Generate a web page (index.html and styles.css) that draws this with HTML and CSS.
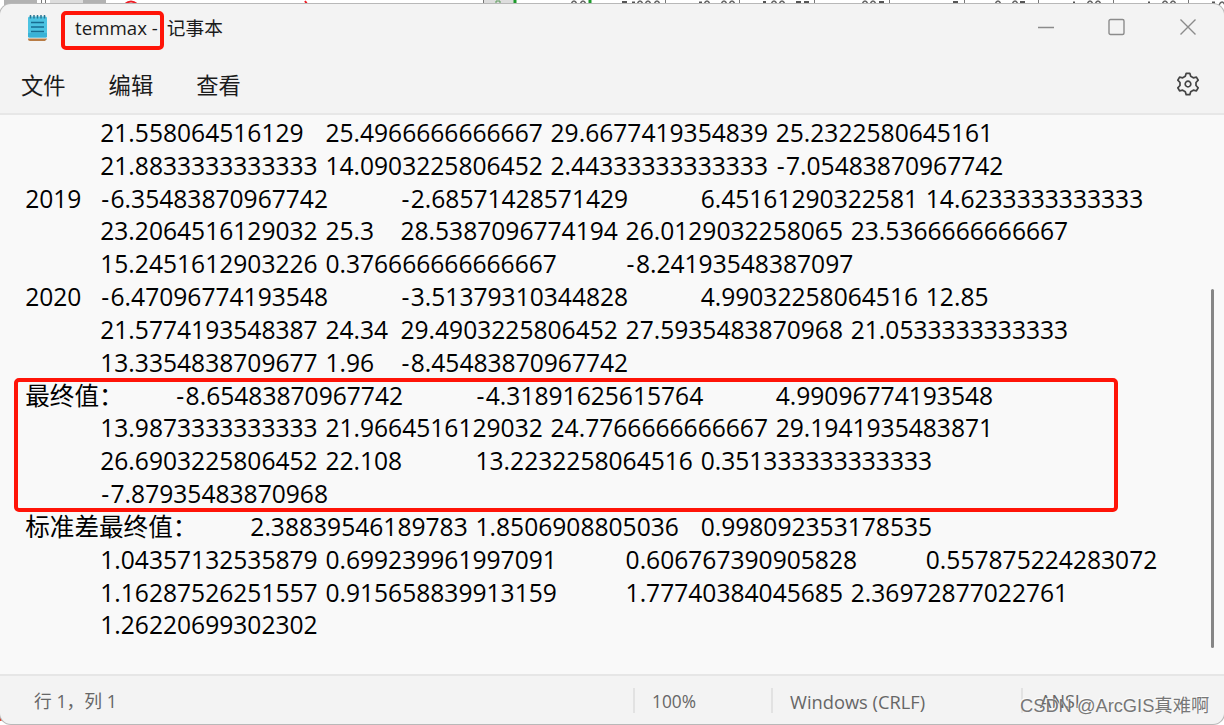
FILE: index.html
```html
<!DOCTYPE html>
<html lang="zh-CN">
<head>
    <meta charset="UTF-8">
    <title>temmax - 记事本</title>
    <link rel="stylesheet" href="styles.css">
</head>
<body>
    <!-- 后面窗口露出的边缘 -->
    <svg class="backdrop" width="1224" height="725" viewBox="0 0 1224 725">
        <rect width="1224" height="725" fill="#fff"/>
        <path fill="#b2b2b2" d="M4 0h33v5H4zM83 0h23v5H83z"/>
        <path fill="#ddd" d="M50 0h33v5H50zM484 0h31v5h-31z"/>
        <path stroke="#777" d="M41.5 0v4M45.5 0v4M483.500 0v4M665.500 0v4M739.500 0v4M814.500 0v4M889.500 0v4M964.500 0v4M1038.500 0v4M1113.500 0v4M1188.500 0v4"/>
        <path stroke="#1c9a2a" stroke-width="3" d="M515 0v4M590 0v4"/>
        <path stroke="#5b9a5b" fill="none" d="M496 4V1h4v3"/>
        <path stroke="#ed1c24" stroke-width="2" fill="none" d="M125 4q6-5 12 0M274 4h2M279 4h10M305 1l2 3"/>
        <path stroke="#666" stroke-width="1.500" fill="none" d="M571 4q3-6 6 0M580 4q3-6 6 0M637 4q3-6 6 0M645 4q3-6 6 0M654 4q3-6 6 0M704 4q3-6 6 0M721 4q3-6 6 0M729 4q3-6 6 0M771 4q3-6 6 0M779 4q3-6 6 0M862 4q3-6 6 0M870 4q3-6 6 0M995 4q3-6 6 0M1012 4q3-6 6 0M1087 4q3-6 6 0M1095 4q3-6 6 0M1162 4q3-6 6 0M1170 4q3-6 6 0M1219 5q3-6 6 0"/>
        <path stroke="#555" stroke-width="3" d="M622 2.500h5M632 3h3M699 3h3M763 2.500h3M796 2.500h5M804 2.500h5M879 2.500h5M953 2.500h5M1020 2.500h5M1073 3h2M1148 3h2M1212 3h3"/>
        <path fill="#e3301b" d="M0 717l4 3-4 1zM44 724h5v1h-5z"/>
        <path fill="#888" d="M63 724h13v1H63z"/>
    </svg>

    <div class="window">
        <div class="titlebar">
            <svg class="app-icon" width="22" height="28" viewBox="0 0 22 28">
                <path d="M1 22h19v3l-2 2H3q-2 0-2-2z" fill="#b87c45"/>
                <path d="M1 23h19v1.500H1z" fill="#fff"/>
                <rect x="1" y="2.500" width="19" height="21" rx="1.500" fill="#4cc3e2"/>
                <path d="M1 19h19v3.500q0 1-1 1H2q-1 0-1-1z" fill="#3ab2d6"/>
                <path d="M3.500 1v3.500M7 1v3.500M10.500 1v3.500M14 1v3.500M17.500 1v3.500" stroke="#2a7591" stroke-width="1.500"/>
                <path d="M4 8.500h13M4 13h13M4 17.500h13" stroke="#176c91" stroke-width="1.500"/>
            </svg>
            <span class="title">temmax -</span>
            <span class="app-name">记事本</span>
            <div class="window-buttons">
                <svg width="18" height="18" viewBox="0 0 18 18"><path d="M1 9.500h16"/></svg>
                <svg width="18" height="18" viewBox="0 0 18 18"><rect x="1" y="1.500" width="15" height="15" rx="1.500"/></svg>
                <svg width="18" height="18" viewBox="0 0 18 18"><path d="M1.500 1.500l15 15M16.500 1.500l-15 15"/></svg>
            </div>
        </div>

        <div class="menubar">
            <span class="menu">文件</span>
            <span class="menu">编辑</span>
            <span class="menu">查看</span>
            <svg class="settings" width="24" height="24" viewBox="-12 -12 24 24">
                <path d="M-2.700-7.700L-1.800-10.700H1.800L2.700-7.700 5.300-6.200 8.400-6.900 10.200-3.800 8-1.500V1.500L10.200 3.800 8.400 6.900 5.300 6.200 2.700 7.700 1.800 10.700H-1.800L-2.700 7.700-5.300 6.200-8.400 6.900-10.200 3.800-8 1.500V-1.500L-10.200-3.800-8.400-6.900-5.300-6.200z"/>
                <circle r="2.800"/>
            </svg>
        </div>

        <div class="editor">
<pre class="text">	21.558064516129	25.4966666666667	29.6677419354839	25.2322580645161
	21.8833333333333	14.0903225806452	2.44333333333333	<span class="neg">-</span>7.05483870967742
2019	<span class="neg">-</span>6.35483870967742	<span class="neg">-</span>2.68571428571429	6.45161290322581	14.6233333333333
	23.2064516129032	25.3	28.5387096774194	26.0129032258065	23.5366666666667
	15.2451612903226	0.376666666666667	<span class="neg">-</span>8.24193548387097
2020	<span class="neg">-</span>6.47096774193548	<span class="neg">-</span>3.51379310344828	4.99032258064516	12.85
	21.5774193548387	24.34	29.4903225806452	27.5935483870968	21.0533333333333
	13.3354838709677	1.96	<span class="neg">-</span>8.45483870967742
最终值：	<span class="neg">-</span>8.65483870967742	<span class="neg">-</span>4.31891625615764	4.99096774193548
	13.9873333333333	21.9664516129032	24.7766666666667	29.1941935483871
	26.6903225806452	22.108	13.2232258064516	0.351333333333333
	<span class="neg">-</span>7.87935483870968
标准差最终值：	2.38839546189783	1.8506908805036	0.998092353178535
	1.04357132535879	0.699239961997091	0.606767390905828	0.557875224283072
	1.16287526251557	0.915658839913159	1.77740384045685	2.36972877022761
	1.26220699302302</pre>
            <div class="scrollbar"></div>
        </div>

        <div class="statusbar">
            <span class="status position">行 1，列 1</span>
            <span class="status zoom">100%</span>
            <span class="status line-ending">Windows (CRLF)</span>
            <span class="status encoding">ANSI</span>
        </div>
    </div>

    <div class="mark mark-title"></div>
    <div class="mark mark-result"></div>
    <div class="watermark">CSDN @ArcGIS真难啊</div>
</body>
</html>
```
FILE: styles.css
```css
* {
    box-sizing: border-box;
}
body {
    margin: 0;
    width: 1224px;
    height: 725px;
    padding: 4px 0 1px;
    position: relative;
    overflow: hidden;
    font-family: "Open Sans", "Noto Sans CJK SC", sans-serif;
    color: #1b1b1b;
}
.backdrop {
    position: absolute;
    left: 0;
    top: 0;
}
.window {
    position: relative;
    height: 720px;
    display: flex;
    flex-direction: column;
    background: #f3f3f3;
    border-radius: 11px;
    box-shadow: 0 0 0 1px #b8b8b8;
    overflow: hidden;
}
.titlebar {
    height: 48px;
    flex: none;
    display: flex;
    align-items: center;
    padding: 0 27px 0 27px;
}
.app-icon {
    flex: none;
}
.title {
    margin-left: 26px;
    font-size: 18.7px;
    line-height: 24px;
}
.app-name {
    margin-left: 9px;
    font-size: 18.7px;
    line-height: 24px;
}
.window-buttons {
    margin-left: auto;
    display: flex;
    gap: 53px;
    padding-bottom: 2px;
}
.window-buttons svg {
    fill: none;
    stroke: #8b8b8b;
    stroke-width: 1.4;
}
.menubar {
    height: 63px;
    flex: none;
    display: flex;
    align-items: center;
    gap: 43px;
    padding: 3px 24px 0 21px;
    border-bottom: 2px solid #e7e7e7;
    font-size: 22.3px;
}
.settings {
    margin-left: auto;
    fill: none;
    stroke: #444;
    stroke-width: 1.7;
    stroke-linejoin: round;
}
.editor {
    flex: 1;
    display: flex;
    justify-content: space-between;
    background: #f9f9f9;
    overflow: hidden;
}
.text {
    margin: 0;
    padding: 2px 0 0 25.2px;
    font-family: "Open Sans", "Noto Sans CJK SC", sans-serif;
    font-size: 24.6px;
    line-height: 32.83px;
    tab-size: 75.05px;
    color: #000;
}
.neg {
    padding: 0 1.4px 0 1px;
}
.scrollbar {
    width: 3px;
    height: 359px;
    margin: 174px 10px 0 0;
    flex: none;
    border-radius: 2px;
    background: #868686;
}
.statusbar {
    height: 50px;
    flex: none;
    display: flex;
    align-items: center;
    border-top: 2px solid #e6e6e6;
    font-size: 18px;
    color: #666;
}
.status {
    height: 25px;
    line-height: 27px;
    padding-left: 17px;
    border-left: 2px solid #e2e2e2;
    white-space: nowrap;
}
.position {
    width: 633px;
    padding-left: 34px;
    border-left: none;
    font-size: 17.8px;
}
.zoom {
    width: 138px;
    font-size: 17.3px;
}
.line-ending {
    width: 250px;
    font-size: 18.3px;
}
.mark {
    position: absolute;
    border: 4px solid #ff1408;
    border-radius: 5px;
}
.mark-title {
    left: 61px;
    top: 11px;
    width: 103px;
    height: 39px;
}
.mark-result {
    left: 14px;
    top: 378px;
    width: 1104px;
    height: 134px;
}
.watermark {
    position: absolute;
    left: 1020px;
    top: 693px;
    font-family: "Liberation Sans", "Noto Sans CJK SC", sans-serif;
    font-size: 18.3px;
    line-height: 26px;
    color: #777;
    white-space: nowrap;
    text-shadow: -1px -1px 0 rgba(255, 255, 255, 0.8);
}
```
